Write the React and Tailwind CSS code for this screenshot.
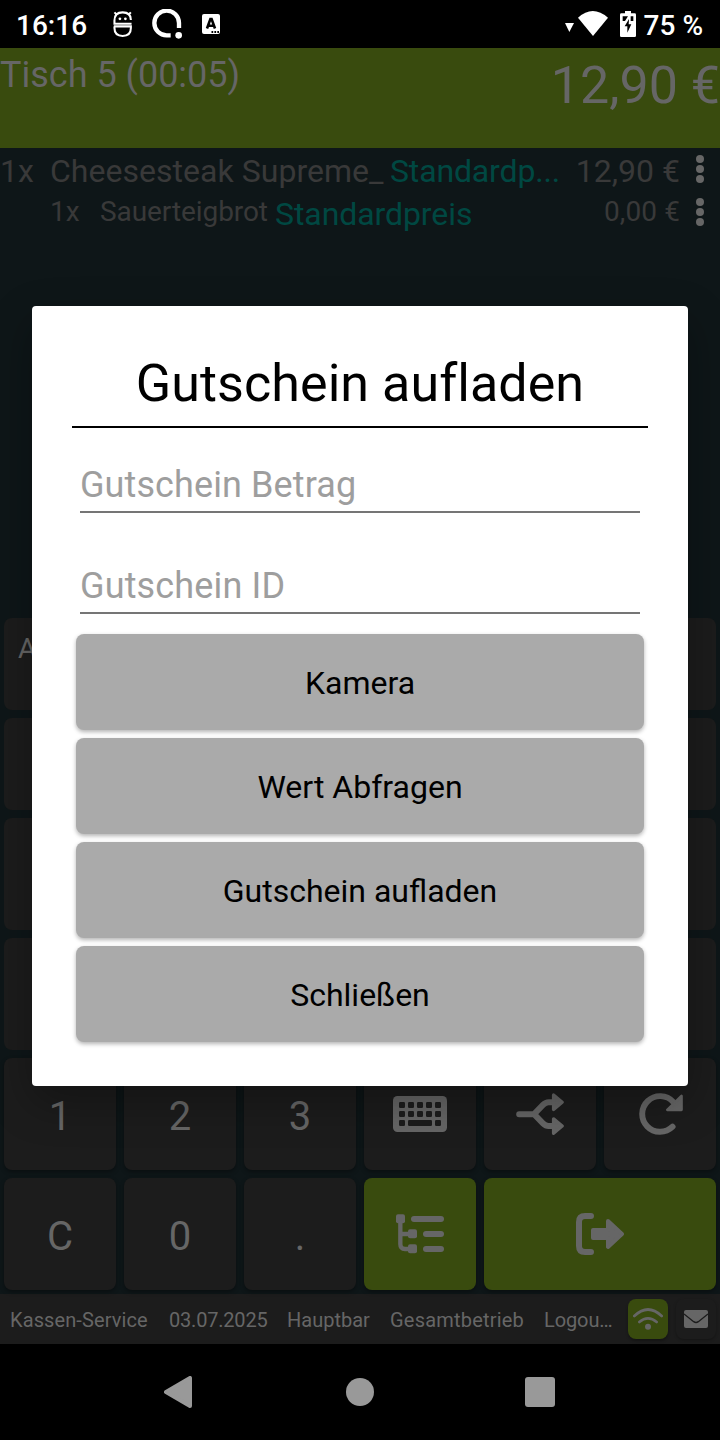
import React from 'react';

const numberKeys = 'flex items-center justify-center rounded-lg bg-[#1c1c1c] pt-[5px] text-[40px] leading-none shadow-[0_2px_4px_rgba(0,0,0,0.35)]';
const iconKey = 'flex items-center justify-center rounded-lg shadow-[0_2px_4px_rgba(0,0,0,0.35)]';

const KeyboardIcon = () => (
    <svg width="54" height="36" viewBox="0 0 54 36" fill="#1c1c1c">
        <rect width="54" height="36" rx="4.5" fill="#666" />
        {[6, 15].map((y) =>
            [6, 15, 24, 33, 42].map((x) => <rect key={`${x}-${y}`} x={x} y={y} width="6" height="6" rx="1.3" />)
        )}
        <rect x="6" y="24" width="6" height="6" rx="1.3" />
        <rect x="15" y="24" width="24" height="6" rx="1.3" />
        <rect x="42" y="24" width="6" height="6" rx="1.3" />
    </svg>
);

const SplitIcon = () => (
    <svg width="48" height="42" viewBox="468 128 144 127" fill="none" stroke="#666" strokeWidth="18" strokeLinecap="round" strokeLinejoin="round">
        <path d="M477 192H522L549 164Q557 156 566 156H580M522 192L549 220Q557 228 566 228H580" />
        <path fill="#666" strokeWidth="10" d="M581 134L607 156L581 178ZM581 206L607 228L581 250Z" />
    </svg>
);

const ReloadIcon = () => (
    <svg width="44" height="42" viewBox="837 128 132 127" fill="none" stroke="#666" strokeLinecap="round" strokeLinejoin="round">
        <path strokeWidth="18" d="M938 230A54 54 0 1 1 940 155" />
        <path fill="#666" strokeWidth="8" d="M965 137V179H922Z" />
    </svg>
);

const TreeIcon = () => (
    <svg width="48" height="40" viewBox="108 492 144 120" fill="#666">
        <rect x="108" y="493" width="27" height="27" rx="6" />
        <rect x="144" y="538" width="27" height="27" rx="6" />
        <rect x="144" y="583" width="27" height="27" rx="6" />
        <path d="M121 512V583Q121 597 135 597H150M121 552H150" fill="none" stroke="#666" strokeWidth="13" />
        <rect x="153" y="498" width="99" height="18" rx="9" />
        <rect x="189" y="543" width="63" height="18" rx="9" />
        <rect x="189" y="588" width="63" height="18" rx="9" />
    </svg>
);

const ExitIcon = () => (
    <svg width="48" height="42" viewBox="648 489 144 126" fill="none" stroke="#666" strokeLinecap="round" strokeLinejoin="round">
        <path strokeWidth="18" d="M693 498H675Q657 498 657 516V588Q657 606 675 606H693" />
        <path fill="#666" strokeWidth="12" d="M699 540H744V513L786 552L744 591V564H699Z" />
    </svg>
);

const WifiIcon = () => (
    <svg width="30" height="22" viewBox="819 774 90 66" fill="none" stroke="#666" strokeWidth="8" strokeLinecap="round">
        <path d="M823 798Q864 759 905 798M838 816Q864 794 890 816" />
        <circle cx="864" cy="830" r="9" fill="#666" stroke="none" />
    </svg>
);

const MailIcon = () => (
    <svg width="24" height="18" viewBox="972 780 72 54">
        <rect x="972" y="780" width="72" height="54" rx="6" fill="#666" />
        <path d="M972 792L1001 815Q1008 820 1015 815L1044 792" fill="none" stroke="#1c1c1c" strokeWidth="4" />
    </svg>
);

const MoreIcon = () => (
    <svg width="8" height="28" viewBox="0 0 8 28" fill="#666" className="mr-4 mb-px ml-4 shrink-0">
        <circle cx="4" cy="4" r="4" />
        <circle cx="4" cy="14" r="4" />
        <circle cx="4" cy="24" r="4" />
    </svg>
);

const StatusBar = () => (
    <div className="flex h-12 items-center bg-black text-[28px] leading-none font-medium text-white">
        <span className="w-[96px] pt-[3px] pl-4">16:16</span>
        <svg width="20" height="26" viewBox="341 34 58 76" className="ml-[17px]" fill="none" stroke="#fff" strokeWidth="6">
            <path d="M395 71H345V62Q345 38 369 38Q393 38 393 60M343 79H393V84Q393 107 369 107Q345 107 345 84V79" />
            <path d="M352 45L345 38M386 45L393 38" />
            <circle cx="361" cy="57" r="4" fill="#fff" stroke="none" />
            <circle cx="377" cy="57" r="4" fill="#fff" stroke="none" />
        </svg>
        <svg width="30" height="30" viewBox="456 27 90 90" className="ml-[19px]" fill="none" stroke="#fff" strokeWidth="13">
            <path d="M512 106H500A37 37 0 1 1 537 69V84" />
            <circle cx="536" cy="106" r="10" fill="#fff" stroke="none" />
        </svg>
        <span className="ml-5 flex h-5 w-[18px] items-start justify-center rounded-[2px] bg-white text-black">
            <svg width="18" height="20" viewBox="0 0 18 20" fill="none" stroke="#000">
                <path strokeWidth="2.6" d="M5 14.5L8.4 5H9.6L13 14.5M6.5 11.8H11.5" />
                <path strokeWidth="1.8" strokeDasharray="1.7 1.2" d="M9.5 18H17.5" />
            </svg>
        </span>
        <svg width="44" height="26" viewBox="615 34 132 78" fill="#fff" className="ml-auto">
            <path d="M615 70H642L628 97Z" />
            <path d="M654 54Q698 14 744 54L699 109Z" />
        </svg>
        <svg width="16" height="26" viewBox="780 33 48 78" className="mr-2 ml-[11px]">
            <path d="M795 33H813V40H824Q828 40 828 44V107Q828 111 824 111H784Q780 111 780 107V44Q780 40 784 40H795Z" fill="#fff" />
            <path d="M807 57L794 79H802V98L814 73H806ZM788 49H804L795 63H788ZM812 49H820V63H812Z" fill="#000" />
        </svg>
        <span className="mr-[17px] pt-[3px]">75 %</span>
    </div>
);

const OrderList = () => (
    <div className="h-[466px] text-[#393939]">
        <div className="flex h-[43px] items-center text-[32px] leading-none">
            <span className="w-[50px] shrink-0 pt-[3px]">1x</span>
            <span className="w-[340px] shrink-0 pt-[3px] tracking-[0.03px] whitespace-nowrap">Cheesesteak Supreme_</span>
            <span className="pt-[3px] tracking-[-0.15px] whitespace-nowrap text-[#004842]">Standardp...</span>
            <span className="ml-auto pt-[3px] whitespace-nowrap">12,90 €</span>
            <MoreIcon />
        </div>
        <div className="flex h-[43px] items-center text-[28px] leading-none">
            <span className="w-[50px] shrink-0" />
            <span className="w-[50px] shrink-0 pb-[2px]">1x</span>
            <span className="w-[175px] shrink-0 pb-[2px] tracking-[-0.08px]">Sauerteigbrot</span>
            <span className="pt-[3px] text-[32px] tracking-[-0.08px] text-[#004842]">Standardpreis</span>
            <span className="ml-auto pb-[2px] tracking-[0.1px]">0,00 €</span>
            <MoreIcon />
        </div>
    </div>
);

const Keypad = () => (
    <div className="grid grid-cols-6 grid-rows-[92px_92px_112px_112px_112px_112px] gap-2 p-1">
        <div className="col-span-3 rounded-lg bg-[#1c1c1c] pt-4 pl-[14px] text-[28px] leading-[30px]">A</div>
        <div className="col-span-3 rounded-lg bg-[#1c1c1c]" />
        <div className="col-span-3 rounded-lg bg-[#1c1c1c]" />
        <div className="col-span-3 rounded-lg bg-[#1c1c1c]" />
        {Array.from({ length: 12 }, (_, i) => (
            <div key={i} className="rounded-lg bg-[#1c1c1c]" />
        ))}
        <div className={numberKeys}>1</div>
        <div className={numberKeys}>2</div>
        <div className={numberKeys}>3</div>
        <div className={`${iconKey} bg-[#1c1c1c]`}><KeyboardIcon /></div>
        <div className={`${iconKey} bg-[#1c1c1c]`}><SplitIcon /></div>
        <div className={`${iconKey} bg-[#1c1c1c] pl-[2px]`}><ReloadIcon /></div>
        <div className={numberKeys}>C</div>
        <div className={numberKeys}>0</div>
        <div className={numberKeys}>.</div>
        <div className={`${iconKey} bg-[#394b0e]`}><TreeIcon /></div>
        <div className={`${iconKey} col-span-2 bg-[#394b0e]`}><ExitIcon /></div>
    </div>
);

const FooterBar = () => (
    <div className="flex h-[50px] items-center bg-[#1c1c1c] pr-1 text-[20px] leading-none whitespace-nowrap">
        <span className="w-[159px] pt-px pl-[10px] tracking-[0.1px]">Kassen-Service</span>
        <span className="w-[118px] pt-px pl-[10px] tracking-[-0.2px]">03.07.2025</span>
        <span className="w-[103px] pt-px pl-[10px]">Hauptbar</span>
        <span className="w-[154px] pt-px pl-[10px] tracking-[0.2px]">Gesamtbetrieb</span>
        <span className="pt-px pl-[10px] tracking-[-0.1px]">Logou…</span>
        <div className="ml-auto flex gap-2">
            <div className="flex size-10 items-center justify-center rounded-lg bg-[#394b0e] shadow-[0_2px_3px_rgba(0,0,0,0.3)]"><WifiIcon /></div>
            <div className="flex size-10 items-center justify-center rounded-lg shadow-[0_1px_3px_rgba(0,0,0,0.3)]"><MailIcon /></div>
        </div>
    </div>
);

const NavBar = () => (
    <div className="flex h-24 items-center justify-center bg-black">
        <div className="flex w-[180px] justify-center">
            <svg width="28" height="32" viewBox="0 0 28 32" fill="#999" stroke="#999" strokeWidth="4" strokeLinejoin="round" className="-ml-1">
                <path d="M2 16L26 2V30Z" />
            </svg>
        </div>
        <div className="flex w-[180px] justify-center">
            <div className="size-7 rounded-full bg-[#999]" />
        </div>
        <div className="flex w-[180px] justify-center">
            <div className="size-[30px] rounded-[3px] bg-[#999]" />
        </div>
    </div>
);

const DialogButton = ({ children }) => (
    <button className="flex h-24 w-full items-center justify-center rounded-lg bg-[#aaa] pt-px text-[32px] leading-none shadow-[0_2px_4px_rgba(0,0,0,0.3)]">
        {children}
    </button>
);

const VoucherDialog = () => (
    <div className="absolute top-[306px] left-8 h-[780px] w-[656px] rounded-[4px] bg-white px-10 pt-10 text-black shadow-[0_16px_44px_rgba(0,0,0,0.3)]">
        <h1 className="h-[82px] border-b-2 border-black pt-2 text-center text-[52px] leading-[60px] tracking-[0.06px]">Gutschein aufladen</h1>
        <div className="mx-2 h-[85px] border-b-2 border-[#757575] pt-[36px] text-[36px] leading-[42px] tracking-[0.1px] text-[#9e9e9e]">Gutschein Betrag</div>
        <div className="mx-2 h-[101px] border-b-2 border-[#757575] pt-[52px] text-[36px] leading-[42px] tracking-[0.15px] text-[#9e9e9e]">Gutschein ID</div>
        <div className="mx-1 mt-5 flex flex-col gap-2">
            <DialogButton>Kamera</DialogButton>
            <DialogButton>Wert Abfragen</DialogButton>
            <DialogButton>Gutschein aufladen</DialogButton>
            <DialogButton>Schließen</DialogButton>
        </div>
    </div>
);

const App = () => {
    return (
        <div className="relative h-[1440px] w-[720px] overflow-hidden bg-[#0e1618] font-['Roboto',sans-serif] text-[#666]">
            <StatusBar />
            <div className="flex h-[100px] justify-between bg-[#394b0e]">
                <span className="pt-[6px] text-[36px] leading-[42px]">Tisch 5 (00:05)</span>
                <span className="pt-2 text-[52px] leading-[60px]">12,90 €</span>
            </div>
            <OrderList />
            <Keypad />
            <FooterBar />
            <NavBar />
            <VoucherDialog />
        </div>
    );
};

export default App;
